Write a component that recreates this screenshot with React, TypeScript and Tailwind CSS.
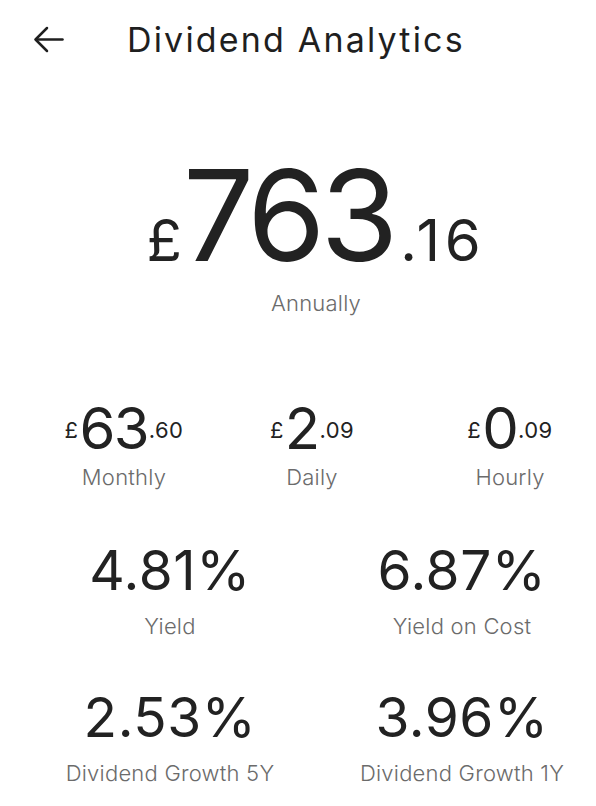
import React from 'react';

const font = "font-['Inter','Noto_Sans',sans-serif]";

const BackArrow = () => (
  <svg width="31" height="27" viewBox="0 0 31 27" fill="none" stroke="#1f1f1f" strokeWidth="2.5" strokeLinecap="round" strokeLinejoin="round">
    <path d="M29.5 13.5H3" />
    <path d="M14 2L2.5 13.5L14 25" />
  </svg>
);

const Small = ({ children }: { children: React.ReactNode }) => (
  <span className="text-[22px] leading-none mt-[20px] tracking-[0.02em]">{children}</span>
);

const Money = ({ pounds, pence, label }: { pounds: string; pence: string; label: string }) => (
  <div className="flex flex-col items-center">
    <div className="flex items-start">
      <Small>£</Small>
      <span className="text-[58px] leading-none tracking-[-0.03em] mx-[1px]">{pounds}</span>
      <Small>.{pence}</Small>
    </div>
    <div className="mt-[9px] text-[22px] leading-none tracking-[0.01em] text-[#6b6b6b] font-light">{label}</div>
  </div>
);

const Stat = ({ value, label }: { value: string; label: string }) => (
  <div className="flex flex-col items-center">
    <div className="text-[55px] leading-none tracking-[0.01em]">{value}</div>
    <div className="mt-[17px] text-[22px] leading-none tracking-[0.01em] text-[#6b6b6b] font-light">{label}</div>
  </div>
);

export default function App() {
  return (
    <div className={`w-[596px] h-[806px] bg-white text-[#222] overflow-hidden ${font}`}>
      {/* Header */}
      <div className="flex items-center pt-[23px] pl-[33px]">
        <div className="-mt-[2px]">
          <BackArrow />
        </div>
        <h1 className="ml-[63px] text-[34px] leading-none font-normal tracking-[0.064em] text-[#1f1f1f]">Dividend Analytics</h1>
      </div>

      {/* Annual */}
      <div className="mt-[108px] pl-[36px] flex justify-center items-baseline">
        <span className="text-[58px] leading-[0.8] mr-[1px]">£</span>
        <span className="text-[126px] leading-[0.8] tracking-[-0.04em]">763</span>
        <span className="text-[58px] leading-[0.8] ml-[7px] tracking-[0.08em]">.16</span>
      </div>
      <div className="mt-[26px] pl-[36px] text-center text-[22px] leading-none tracking-[0.01em] text-[#6b6b6b] font-light">Annually</div>

      {/* Monthly / Daily / Hourly */}
      <div className="mt-[85px] pl-[48px] grid grid-cols-[152px_224px_172px]">
        <Money pounds="63" pence="60" label="Monthly" />
        <Money pounds="2" pence="09" label="Daily" />
        <Money pounds="0" pence="09" label="Hourly" />
      </div>

      {/* Yield */}
      <div className="mt-[55px] pl-[40px] grid grid-cols-[260px_268px] gap-x-[28px]">
        <Stat value="4.81%" label="Yield" />
        <Stat value="6.87%" label="Yield on Cost" />
      </div>

      {/* Growth */}
      <div className="mt-[53px] pl-[40px] grid grid-cols-[260px_268px] gap-x-[28px]">
        <Stat value="2.53%" label="Dividend Growth 5Y" />
        <Stat value="3.96%" label="Dividend Growth 1Y" />
      </div>
    </div>
  );
}
